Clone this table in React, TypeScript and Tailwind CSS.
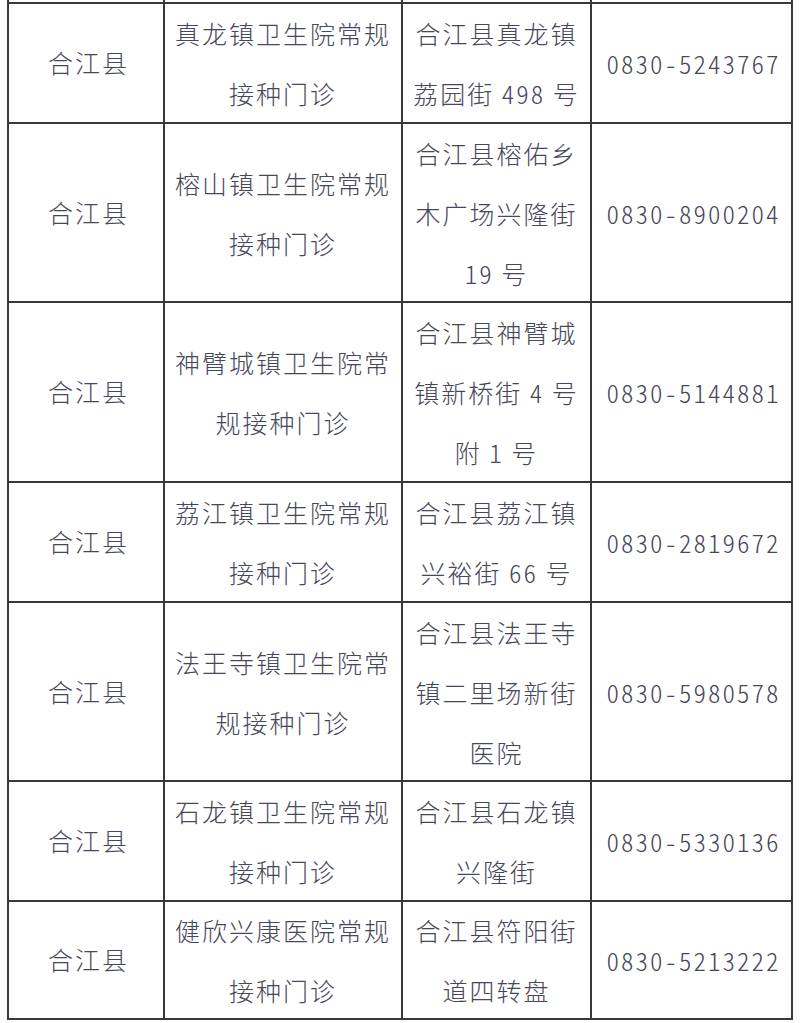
const rows: { h: string; name: string[]; addr: string[]; tel: string }[] = [
  { h: "h-[120px]", name: ["真龙镇卫生院常规", "接种门诊"], addr: ["合江县真龙镇", "荔园街 498 号"], tel: "0830-5243767" },
  { h: "h-[179px]", name: ["榕山镇卫生院常规", "接种门诊"], addr: ["合江县榕佑乡", "木广场兴隆街", "19 号"], tel: "0830-8900204" },
  { h: "h-[180px]", name: ["神臂城镇卫生院常", "规接种门诊"], addr: ["合江县神臂城", "镇新桥街 4 号", "附 1 号"], tel: "0830-5144881" },
  { h: "h-[120px]", name: ["荔江镇卫生院常规", "接种门诊"], addr: ["合江县荔江镇", "兴裕街 66 号"], tel: "0830-2819672" },
  { h: "h-[179px]", name: ["法王寺镇卫生院常", "规接种门诊"], addr: ["合江县法王寺", "镇二里场新街", "医院"], tel: "0830-5980578" },
  { h: "h-[120px]", name: ["石龙镇卫生院常规", "接种门诊"], addr: ["合江县石龙镇", "兴隆街"], tel: "0830-5330136" },
  { h: "h-[118px]", name: ["健欣兴康医院常规", "接种门诊"], addr: ["合江县符阳街", "道四转盘"], tel: "0830-5213222" },
];

const cell =
  "box-border flex flex-col items-center justify-center text-center border-r-2 border-b-2 border-[#383838]";

function Lines({ lines }: { lines: string[] }) {
  return (
    <>
      {lines.map((l) => (
        <span key={l} className="block whitespace-pre">
          {l}
        </span>
      ))}
    </>
  );
}

export default function App() {
  return (
    <div className="w-[800px] h-[1023px] bg-white overflow-hidden">
      <div
        className="ml-[7px] w-[786px] grid grid-cols-[156px_238px_189px_201px] border-l-2 border-[#383838] text-[25px] leading-[60px] tracking-[2px] [word-spacing:-7px] text-[#47475a] [font-feature-settings:'hwid'] font-light"
        style={{ fontFamily: '"Noto Sans CJK SC", "Noto Sans", sans-serif' }}
      >
        {/* sliver of the row above */}
        <div className={`${cell} h-[4px]`} />
        <div className={`${cell} h-[4px]`} />
        <div className={`${cell} h-[4px]`} />
        <div className={`${cell} h-[4px]`} />

        {rows.map((r) => (
          <div key={r.tel} className="contents">
            <div className={`${cell} ${r.h} pl-[5px] pb-[2px]`}>合江县</div>
            <div className={`${cell} ${r.h}`}>
              <Lines lines={r.name} />
            </div>
            <div className={`${cell} ${r.h}`}>
              <Lines lines={r.addr} />
            </div>
            <div className={`${cell} ${r.h} pl-[4px]`}>{r.tel}</div>
          </div>
        ))}
      </div>
    </div>
  );
}
